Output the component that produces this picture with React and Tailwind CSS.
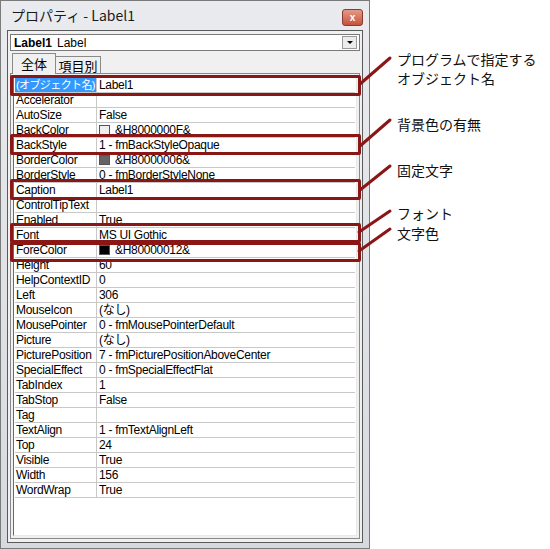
const rows = [
  { name: "(オブジェクト名)", value: "Label1", selected: true, jp: true },
  { name: "Accelerator", value: "" },
  { name: "AutoSize", value: "False" },
  { name: "BackColor", value: "&H8000000F&", swatch: "bg-[#f0f0f0]" },
  { name: "BackStyle", value: "1 - fmBackStyleOpaque" },
  { name: "BorderColor", value: "&H80000006&", swatch: "bg-[#646464]" },
  { name: "BorderStyle", value: "0 - fmBorderStyleNone" },
  { name: "Caption", value: "Label1" },
  { name: "ControlTipText", value: "" },
  { name: "Enabled", value: "True" },
  { name: "Font", value: "MS UI Gothic" },
  { name: "ForeColor", value: "&H80000012&", swatch: "bg-black" },
  { name: "Height", value: "60" },
  { name: "HelpContextID", value: "0" },
  { name: "Left", value: "306" },
  { name: "MouseIcon", value: "(なし)" },
  { name: "MousePointer", value: "0 - fmMousePointerDefault" },
  { name: "Picture", value: "(なし)" },
  { name: "PicturePosition", value: "7 - fmPicturePositionAboveCenter" },
  { name: "SpecialEffect", value: "0 - fmSpecialEffectFlat" },
  { name: "TabIndex", value: "1" },
  { name: "TabStop", value: "False" },
  { name: "Tag", value: "" },
  { name: "TextAlign", value: "1 - fmTextAlignLeft" },
  { name: "Top", value: "24" },
  { name: "Visible", value: "True" },
  { name: "Width", value: "156" },
  { name: "WordWrap", value: "True" },
];

// red highlight boxes (annotation overlay)
const boxes = [
  { top: "top-[75px]", h: "h-[21px]" },
  { top: "top-[134px]", h: "h-[21px]" },
  { top: "top-[179px]", h: "h-[21px]" },
  { top: "top-[223px]", h: "h-[20px]" },
  { top: "top-[242px]", h: "h-[20px]" },
];

const App = () => {
  return (
    <div className="relative w-[550px] h-[549px] bg-white overflow-hidden font-['Liberation_Sans','Noto_Sans_CJK_JP',sans-serif]">
      {/* window */}
      <div className="w-[370px] h-[549px] flex flex-col border border-[#7a7a7a] bg-gradient-to-b from-[#e9ebee] to-[#d6d9de]">
        {/* title bar */}
        <div className="h-[29px] flex items-center justify-between pl-[10px] pr-[6px]">
          <span className="text-[14px] text-[#1a1a1a] font-['Noto_Sans_CJK_JP',sans-serif]">プロパティ - Label1</span>
          <div className="w-[21px] h-[17px] mt-[4px] rounded-[3px] border border-[#8a3a2e] bg-gradient-to-b from-[#e39a88] to-[#c5523c] flex items-center justify-center text-white text-[10px] font-bold leading-none">
            x
          </div>
        </div>
        {/* client area */}
        <div className="flex-1 ml-[6px] mr-[6px] mb-[5px] border border-[#5a5a5a] bg-[#f0f0f0] flex flex-col px-[2px] pt-[3px] pb-[3px]">
          {/* combo */}
          <div className="h-[17px] bg-white border border-[#7a7a7a] flex items-center text-[12px] pl-[3px] pr-[2px]">
            <span className="font-bold">Label1</span>
            <span className="ml-[5px]">Label</span>
            <div className="ml-auto w-[15px] h-[13px] bg-[#ececec] border border-[#9a9a9a] flex items-center justify-center">
              <div className="w-0 h-0 border-l-[3px] border-r-[3px] border-t-[3px] border-l-transparent border-r-transparent border-t-black" />
            </div>
          </div>
          {/* tabs */}
          <div className="h-[22px] flex items-end pl-[2px] mt-[1px] font-['Noto_Sans_CJK_JP',sans-serif]">
            <div className="h-[21px] w-[44px] bg-[#f0f0f0] border border-b-0 border-[#8a8a8a] flex items-center justify-center text-[13px] relative z-10">
              全体
            </div>
            <div className="h-[18px] w-[45px] bg-[#f0f0f0] border border-l-0 border-b-0 border-[#8a8a8a] flex items-center justify-center text-[13px]">
              項目別
            </div>
          </div>
          {/* grid */}
          <div className="flex-1 border border-[#8a8a8a] p-[2px] bg-[#f0f0f0] -mt-px">
            <div className="h-full border border-t-[#6a6a6a] border-l-[#6a6a6a] border-r-[#e8e8e8] border-b-[#e8e8e8] bg-white pt-[1px] pl-px pr-px">
              {rows.map((r) => (
                <div key={r.name} className="h-[15px] flex border-b border-[#c8c8c8] text-[12px] leading-[14px] tracking-[-0.3px] text-black">
                  <div
                    className={
                      r.selected
                        ? "w-[82px] shrink-0 border-r border-[#c8c8c8] bg-[#3399ff] text-white text-[11px] tracking-[-0.6px] pl-[1px] whitespace-nowrap overflow-hidden"
                        : "w-[82px] shrink-0 border-r border-[#c8c8c8] pl-[1px] whitespace-nowrap overflow-hidden"
                    }
                  >
                    {r.name}
                  </div>
                  <div className="flex items-center pl-[2px] whitespace-nowrap">
                    {r.swatch && (
                      <span className={"inline-block w-[11px] h-[10px] border border-[#555] mr-[5px] " + r.swatch} />
                    )}
                    {r.value}
                  </div>
                </div>
              ))}
            </div>
          </div>
        </div>
      </div>

      {/* annotation boxes */}
      {boxes.map((b, i) => (
        <div
          key={i}
          className={"absolute left-[10px] w-[351px] border-[3px] border-[#8b1616] rounded-[2px] " + b.top + " " + b.h}
        />
      ))}

      {/* leader lines */}
      <svg className="absolute left-0 top-0" width="550" height="549">
        <g stroke="#8b1616" strokeWidth="3" strokeLinecap="round">
          <line x1="360" y1="84" x2="390" y2="58" />
          <line x1="360" y1="146" x2="390" y2="120" />
          <line x1="360" y1="190" x2="390" y2="166" />
          <line x1="359" y1="232" x2="390" y2="211" />
          <line x1="359" y1="251" x2="390" y2="229" />
        </g>
      </svg>

      {/* callout texts */}
      <div className="absolute left-[397px] top-[50px] text-[14px] leading-[19px] text-[#111] font-['Noto_Sans_CJK_JP',sans-serif]">
        <div>プログラムで指定する</div>
        <div>オブジェクト名</div>
      </div>
      <div className="absolute left-[397px] top-[115px] text-[14px] leading-[18px] text-[#111] font-['Noto_Sans_CJK_JP',sans-serif]">
        背景色の有無
      </div>
      <div className="absolute left-[397px] top-[161px] text-[14px] leading-[18px] text-[#111] font-['Noto_Sans_CJK_JP',sans-serif]">
        固定文字
      </div>
      <div className="absolute left-[397px] top-[204px] text-[14px] leading-[18px] text-[#111] font-['Noto_Sans_CJK_JP',sans-serif]">
        フォント
      </div>
      <div className="absolute left-[397px] top-[224px] text-[14px] leading-[18px] text-[#111] font-['Noto_Sans_CJK_JP',sans-serif]">
        文字色
      </div>
    </div>
  );
};

export default App;
